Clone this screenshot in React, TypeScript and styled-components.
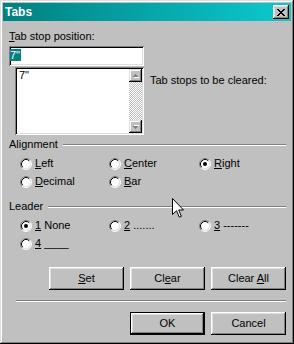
import styled, { createGlobalStyle } from 'styled-components';

const GlobalStyle = createGlobalStyle`
  html, body {
    margin: 0;
    padding: 0;
    background: #c0c0c0;
  }
`;

const Window = styled.div`
  position: relative;
  box-sizing: border-box;
  width: 294px;
  height: 344px;
  padding: 3px;
  display: flex;
  flex-direction: column;
  background: #c0c0c0;
  color: #000;
  font: 11px/13px "Liberation Sans", Arial, sans-serif;
  box-shadow: inset -1px -1px #000, inset 1px 1px #dfdfdf, inset -2px -2px #808080, inset 2px 2px #fff;
`;

const TitleBar = styled.div`
  height: 18px;
  flex: none;
  display: flex;
  align-items: center;
  justify-content: space-between;
  padding: 0 2px;
  background: linear-gradient(to right, #008080, #0ccad0);
`;

const Title = styled.span`
  color: #fff;
  font-weight: bold;
  font-size: 12px;
`;

const CloseButton = styled.div`
  width: 16px;
  height: 14px;
  display: flex;
  align-items: center;
  justify-content: center;
  background: #c0c0c0;
  box-shadow: inset -1px -1px #000, inset 1px 1px #fff, inset -2px -2px #808080, inset 2px 2px #dfdfdf;
`;

const Body = styled.div`
  flex: 1;
  display: flex;
  flex-direction: column;
  padding: 9px 5px 0 6px;
`;

const FieldLabel = styled.div`
  height: 13px;
`;

const TextField = styled.div`
  box-sizing: border-box;
  width: 135px;
  height: 20px;
  margin-top: 3px;
  padding: 3px 1px;
  background: #fff;
  box-shadow: inset 1px 1px #808080, inset -1px -1px #fff, inset 2px 2px #000, inset -2px -2px #dfdfdf;
`;

const Selected = styled.span`
  display: inline-block;
  height: 12px;
  line-height: 12px;
  padding-right: 1px;
  background: #008080;
  color: #fff;
`;

const ListRow = styled.div`
  display: flex;
  align-items: flex-start;
  margin-top: 1px;
`;

const ListBox = styled.div`
  box-sizing: border-box;
  width: 129px;
  height: 68px;
  margin-left: 6px;
  padding: 2px;
  display: flex;
  background: #fff;
  box-shadow: inset 1px 1px #808080, inset -1px -1px #fff, inset 2px 2px #000, inset -2px -2px #dfdfdf;
`;

const ListItems = styled.div`
  flex: 1;
  padding-left: 2px;
`;

const ScrollBar = styled.div`
  width: 13px;
  display: flex;
  flex-direction: column;
`;

const ScrollTrack = styled.div`
  flex: 1;
  background-image: repeating-conic-gradient(#fff 0 25%, #c0c0c0 0 50%);
  background-size: 2px 2px;
`;

const ArrowButton = styled.div`
  height: 13px;
  display: flex;
  align-items: center;
  justify-content: center;
  background: #c0c0c0;
  box-shadow: inset -1px -1px #000, inset 1px 1px #dfdfdf, inset -2px -2px #808080, inset 2px 2px #fff;
`;

const SideLabel = styled.div`
  margin: 7px 0 0 6px;
`;

const GroupHeader = styled.div<{ $top: number }>`
  display: flex;
  align-items: flex-start;
  gap: 5px;
  margin-top: ${(p) => p.$top}px;
`;

const EtchedLine = styled.div<{ $inset?: number }>`
  flex: 1;
  height: 0;
  margin-top: 6px;
  margin-left: ${(p) => p.$inset || 0}px;
  border-top: 1px solid #808080;
  border-bottom: 1px solid #fff;
`;

const RadioGrid = styled.div`
  display: grid;
  grid-template-columns: 89px 90px 1fr;
  row-gap: 5px;
  margin-top: 6px;
  padding-left: 11px;
`;

const RadioOption = styled.div`
  display: flex;
  align-items: flex-start;
  gap: 3px;
  height: 13px;
  white-space: nowrap;
`;

const RadioMark = styled.svg`
  flex: none;
  margin-top: 1px;
`;

const ButtonRow = styled.div<{ $top: number }>`
  display: flex;
  justify-content: flex-end;
  gap: 6px;
  margin-top: ${(p) => p.$top}px;
`;

const Separator = styled.div`
  height: 0;
  margin: 10px 0 0 7px;
  border-top: 1px solid #808080;
  border-bottom: 1px solid #fff;
`;

const PushButton = styled.div<{ $default?: boolean }>`
  box-sizing: border-box;
  width: 75px;
  height: 23px;
  display: flex;
  align-items: center;
  justify-content: center;
  background: #c0c0c0;
  box-shadow: ${(p) =>
    p.$default
      ? 'inset 0 0 0 1px #000, inset -2px -2px #000, inset 2px 2px #fff, inset -3px -3px #808080, inset 3px 3px #dfdfdf'
      : 'inset -1px -1px #000, inset 1px 1px #fff, inset -2px -2px #808080, inset 2px 2px #dfdfdf'};
`;

const Cursor = styled.svg`
  position: absolute;
  left: 172px;
  top: 198px;
`;

const Radio = ({ checked }: { checked?: boolean }) => (
  <RadioMark width="12" height="12" viewBox="0 0 12 12">
    <circle cx="6" cy="6" r="5" fill="#fff" />
    <path d="M2.11 9.89A5.5 5.5 0 0 1 9.89 2.11" fill="none" stroke="#808080" />
    <path d="M9.89 2.11A5.5 5.5 0 0 1 2.11 9.89" fill="none" stroke="#fff" />
    <path d="M2.82 9.18A4.5 4.5 0 0 1 9.18 2.82" fill="none" stroke="#000" />
    <path d="M9.18 2.82A4.5 4.5 0 0 1 2.82 9.18" fill="none" stroke="#dfdfdf" />
    {checked && <circle cx="6" cy="6" r="2" fill="#000" />}
  </RadioMark>
);

const Arrow = ({ down }: { down?: boolean }) => (
  <svg width="6" height="4" viewBox="0 0 6 4" shapeRendering="crispEdges" style={{ transform: down ? 'scaleY(-1)' : undefined }}>
    <path d="M3 1h1v1H3zM2 2h3v1H2zM1 3h5v1H1z" fill="#fff" />
    <path d="M2 0h1v1H2zM1 1h3v1H1zM0 2h5v1H0z" fill="#808080" />
  </svg>
);

const Option = ({ children, checked }: { children: React.ReactNode; checked?: boolean }) => (
  <RadioOption>
    <Radio checked={checked} />
    <span>{children}</span>
  </RadioOption>
);

const App = () => {
  return (
    <Window>
      <GlobalStyle />
      <TitleBar>
        <Title>Tabs</Title>
        <CloseButton>
          <svg width="8" height="7" viewBox="0 0 8 7" shapeRendering="crispEdges">
            <path d="M0 0h2v1H0zM6 0h2v1H6zM1 1h2v1H1zM5 1h2v1H5zM2 2h4v1H2zM3 3h2v1H3zM2 4h4v1H2zM1 5h2v1H1zM5 5h2v1H5zM0 6h2v1H0zM6 6h2v1H6z" fill="#000" />
          </svg>
        </CloseButton>
      </TitleBar>
      <Body>
        <FieldLabel><u>T</u>ab stop position:</FieldLabel>
        <TextField>
          <Selected>7"</Selected>
        </TextField>
        <ListRow>
          <ListBox>
            <ListItems>7"</ListItems>
            <ScrollBar>
              <ArrowButton><Arrow /></ArrowButton>
              <ScrollTrack />
              <ArrowButton><Arrow down /></ArrowButton>
            </ScrollBar>
          </ListBox>
          <SideLabel>Tab stops to be cleared:</SideLabel>
        </ListRow>

        <GroupHeader $top={3}>
          <span>Alignment</span>
          <EtchedLine />
        </GroupHeader>
        <RadioGrid>
          <Option><u>L</u>eft</Option>
          <Option><u>C</u>enter</Option>
          <Option checked><u>R</u>ight</Option>
          <Option><u>D</u>ecimal</Option>
          <Option><u>B</u>ar</Option>
        </RadioGrid>

        <GroupHeader $top={12}>
          <span>Leader</span>
          <EtchedLine />
        </GroupHeader>
        <RadioGrid>
          <Option checked><u>1</u> None</Option>
          <Option><u>2</u> .......</Option>
          <Option><u>3</u> -------</Option>
          <Option><u>4</u> ____</Option>
        </RadioGrid>

        <ButtonRow $top={17}>
          <PushButton><span><u>S</u>et</span></PushButton>
          <PushButton><span>Cl<u>e</u>ar</span></PushButton>
          <PushButton><span>Clear <u>A</u>ll</span></PushButton>
        </ButtonRow>
        <Separator />
        <ButtonRow $top={10}>
          <PushButton $default>OK</PushButton>
          <PushButton>Cancel</PushButton>
        </ButtonRow>
      </Body>
      <Cursor width="12" height="20" viewBox="0 0 12 20">
        <path d="M0.5 0.5V16.5L4.5 12.8L7.3 19.2L9.4 18.3L6.7 12H11.5Z" fill="#fff" stroke="#000" strokeLinejoin="miter" />
      </Cursor>
    </Window>
  );
};

export default App;
